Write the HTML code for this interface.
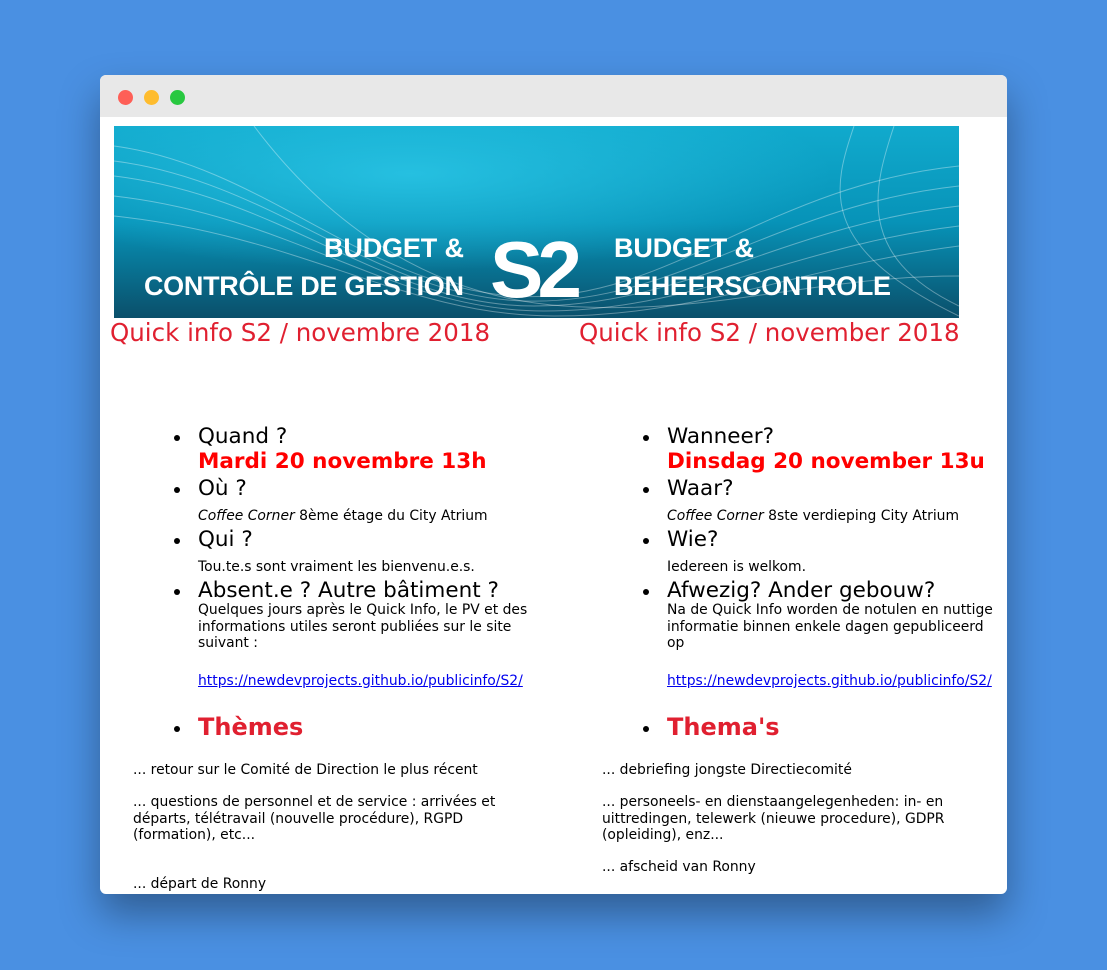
<!DOCTYPE html>
<html><head><meta charset="utf-8"><style>
body{margin:0;width:1107px;height:970px;background:#4a90e2;font-family:"DejaVu Sans","Liberation Sans",sans-serif;overflow:hidden;position:relative}
.win{position:absolute;left:100px;top:75px;width:907px;height:819px;background:#fff;border-radius:6px;overflow:hidden;box-shadow:0 20px 40px rgba(0,0,0,.35)}
.tb{position:absolute;left:0;top:0;width:907px;height:42px;background:#e8e8e8}
.dot{position:absolute;top:15px;width:15px;height:15px;border-radius:50%}
.a{position:absolute;white-space:nowrap;color:#000}
.s{font-size:13.9px;line-height:16.5px}
.b{font-size:21.5px;line-height:24px}
.r{font-size:21.5px;line-height:26px;font-weight:bold;color:#f00}
.h{font-size:24px;line-height:28px;font-weight:bold;color:#e02030}
.q{font-size:24.5px;line-height:28px;color:#e02030}
.bul{position:absolute;width:6px;height:6px;border-radius:50%;background:#000}
a{color:#00e}
</style></head><body>
<div class="win">
<div class="tb"><div class="dot" style="left:18px;background:#fe5f57"></div><div class="dot" style="left:44px;background:#febc2e"></div><div class="dot" style="left:70px;background:#28c840"></div></div>
<svg style="position:absolute;left:14px;top:51px" width="845" height="192">
<defs><linearGradient id="g" x1="0" y1="0" x2="0" y2="1"><stop offset="0" stop-color="#11aacd"/><stop offset=".5" stop-color="#0793b8"/><stop offset="1" stop-color="#0a4f6a"/></linearGradient>
<radialGradient id="h" cx=".35" cy=".25" r=".5"><stop offset="0" stop-color="#2cc8e8" stop-opacity=".8"/><stop offset="1" stop-color="#2cc8e8" stop-opacity="0"/></radialGradient></defs>
<rect width="845" height="192" fill="url(#g)"/><rect width="845" height="192" fill="url(#h)"/>
<g fill="none" stroke="#fff" stroke-opacity=".35" stroke-width="1">
<path d="M0 20 C150 40 250 160 400 170 S650 60 845 40"/><path d="M0 35 C160 55 260 170 410 175 S660 80 845 60"/><path d="M0 50 C170 70 270 180 420 180 S670 100 845 80"/><path d="M0 70 C180 90 280 185 430 185 S680 120 845 100"/><path d="M0 90 C190 110 290 190 440 190 S690 140 845 120"/><path d="M140 0 C200 80 300 170 450 180 S700 150 845 150"/><path d="M740 0 C720 60 700 120 845 190"/><path d="M780 0 C760 60 740 130 845 180"/>
</g>
<g fill="#fff" font-family="Liberation Sans Narrow,Liberation Sans,sans-serif" font-weight="bold">
<text x="350" y="131" font-size="27" text-anchor="end" textLength="140">BUDGET &amp;</text>
<text x="350" y="169" font-size="27" text-anchor="end" textLength="320">CONTRÔLE DE GESTION</text>
<text x="376" y="171" font-size="80" textLength="92">S2</text>
<text x="500" y="131" font-size="27" textLength="140">BUDGET &amp;</text>
<text x="500" y="169" font-size="27" textLength="277">BEHEERSCONTROLE</text>
</g></svg>
<div class="a q" style="left:10px;top:244px">Quick info S2 / novembre 2018</div>
<div class="a q" style="left:479px;top:244px">Quick info S2 / november 2018</div>

<div class="bul" style="left:74px;top:360px"></div>
<div class="a b" style="left:98px;top:350px">Quand ?</div>
<div class="a r" style="left:98px;top:374px">Mardi 20 novembre 13h</div>
<div class="bul" style="left:74px;top:412px"></div>
<div class="a b" style="left:98px;top:402px">Où ?</div>
<div class="a s" style="left:98px;top:433px"><i>Coffee Corner</i> 8ème étage du City Atrium</div>
<div class="bul" style="left:74px;top:463px"></div>
<div class="a b" style="left:98px;top:453px">Qui ?</div>
<div class="a s" style="left:98px;top:484px">Tou.te.s sont vraiment les bienvenu.e.s.</div>
<div class="bul" style="left:74px;top:514px"></div>
<div class="a b" style="left:98px;top:504px">Absent.e ? Autre bâtiment ?</div>
<div class="a s" style="left:98px;top:527px">Quelques jours après le Quick Info, le PV et des<br>informations utiles seront publiées sur le site<br>suivant :</div>
<div class="a s" style="left:98px;top:598px"><a href="#">https://newdevprojects.github.io/publicinfo/S2/</a></div>
<div class="bul" style="left:74px;top:651px"></div>
<div class="a h" style="left:98px;top:638px">Thèmes</div>
<div class="a s" style="left:33px;top:687px">... retour sur le Comité de Direction le plus récent</div>
<div class="a s" style="left:33px;top:719px">... questions de personnel et de service : arrivées et<br>départs, télétravail (nouvelle procédure), RGPD<br>(formation), etc...</div>
<div class="a s" style="left:33px;top:801px">... départ de Ronny</div>

<div class="bul" style="left:543px;top:360px"></div>
<div class="a b" style="left:567px;top:350px">Wanneer?</div>
<div class="a r" style="left:567px;top:374px">Dinsdag 20 november 13u</div>
<div class="bul" style="left:543px;top:412px"></div>
<div class="a b" style="left:567px;top:402px">Waar?</div>
<div class="a s" style="left:567px;top:433px"><i>Coffee Corner</i> 8ste verdieping City Atrium</div>
<div class="bul" style="left:543px;top:463px"></div>
<div class="a b" style="left:567px;top:453px">Wie?</div>
<div class="a s" style="left:567px;top:484px">Iedereen is welkom.</div>
<div class="bul" style="left:543px;top:514px"></div>
<div class="a b" style="left:567px;top:504px">Afwezig? Ander gebouw?</div>
<div class="a s" style="left:567px;top:527px">Na de Quick Info worden de notulen en nuttige<br>informatie binnen enkele dagen gepubliceerd<br>op</div>
<div class="a s" style="left:567px;top:598px"><a href="#">https://newdevprojects.github.io/publicinfo/S2/</a></div>
<div class="bul" style="left:543px;top:651px"></div>
<div class="a h" style="left:567px;top:638px">Thema's</div>
<div class="a s" style="left:502px;top:687px">... debriefing jongste Directiecomité</div>
<div class="a s" style="left:502px;top:719px">... personeels- en dienstaangelegenheden: in- en<br>uittredingen, telewerk (nieuwe procedure), GDPR<br>(opleiding), enz...</div>
<div class="a s" style="left:502px;top:784px">... afscheid van Ronny</div>
</div>
</body></html>
